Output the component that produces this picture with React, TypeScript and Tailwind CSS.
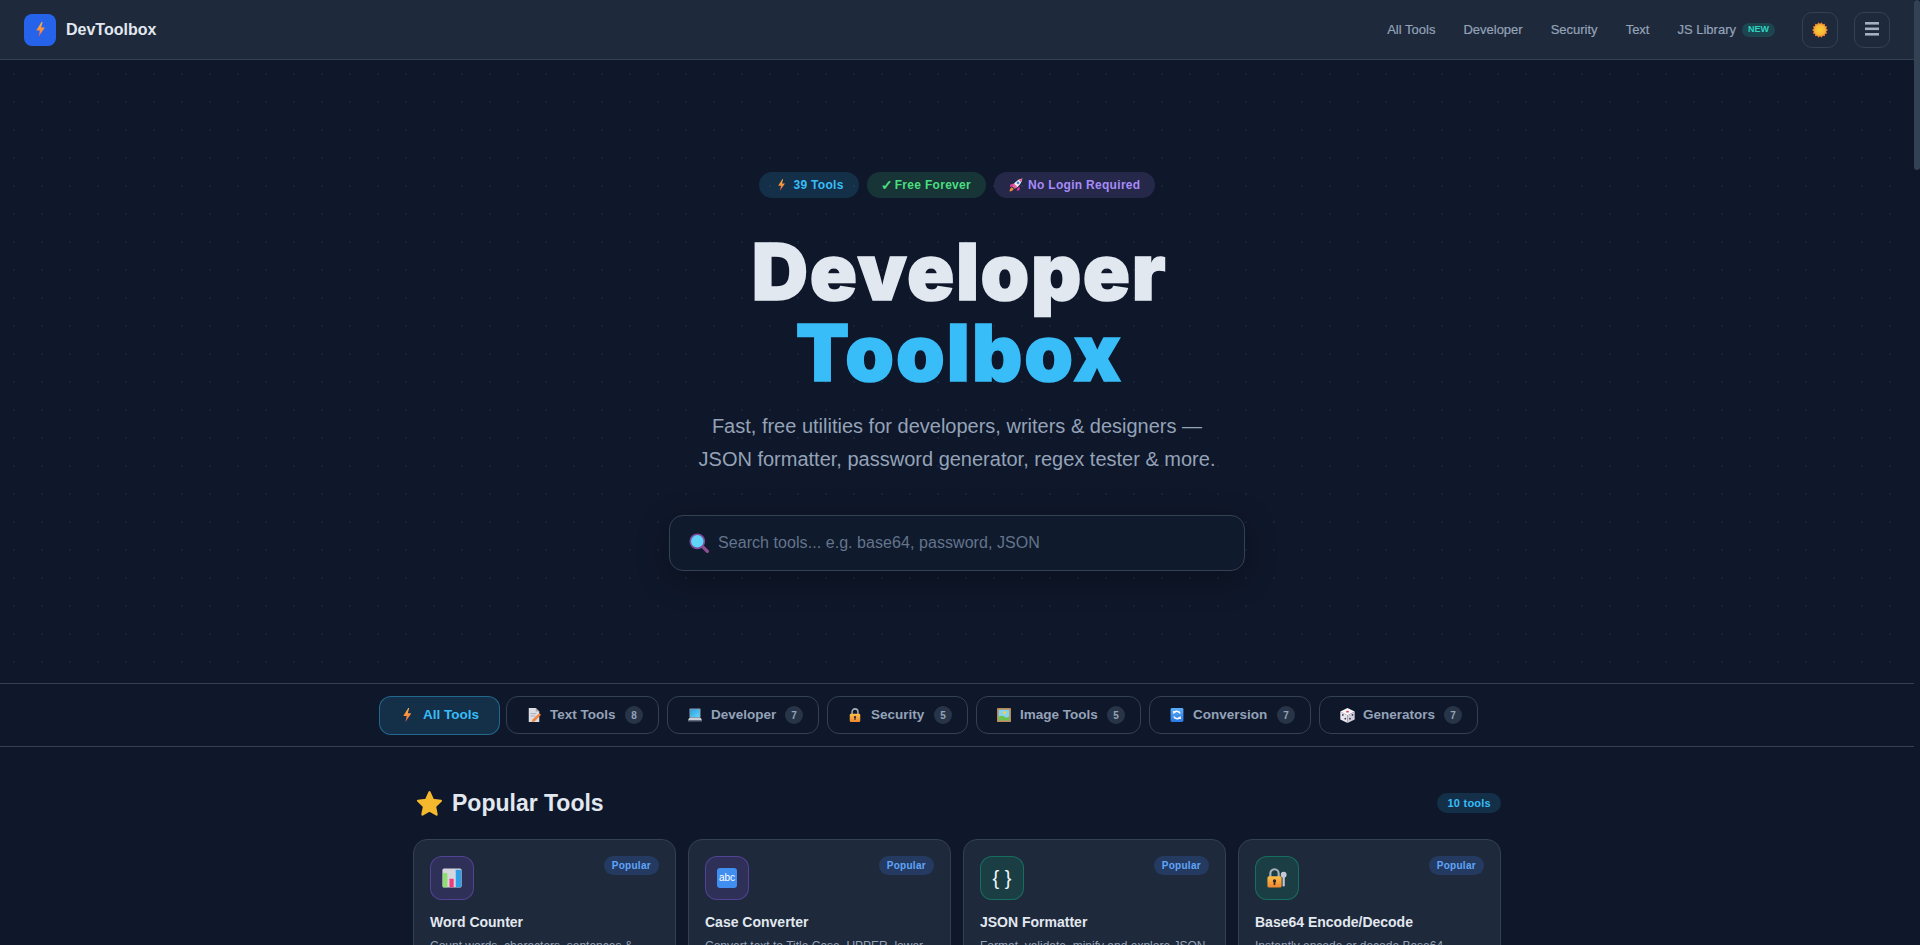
type IconProps = { className?: string };

function Bolt({ className }: IconProps) {
  return (
    <svg viewBox="0 0 9 15" className={className}>
      <defs>
        <linearGradient id="boltGrad" x1="0" y1="0" x2="0" y2="1">
          <stop offset="0" stopColor="#fdb347" />
          <stop offset="0.6" stopColor="#f98a3c" />
          <stop offset="1" stopColor="#ee4d5f" />
        </linearGradient>
      </defs>
      <path d="M5.6 0 0.2 8.6H3.9L2.5 15 8.9 5.6H5.100L6.600 0Z" fill="url(#boltGrad)" />
    </svg>
  );
}

const sunPoints = Array.from({ length: 28 }, (_, i) => {
  const r = i % 2 === 0 ? 12 : 9.4;
  const a = (i * Math.PI) / 14;
  return `${(12 + r * Math.cos(a)).toFixed(2)},${(12 + r * Math.sin(a)).toFixed(2)}`;
}).join(" ");

function Sun({ className }: IconProps) {
  return (
    <svg viewBox="0 0 24 24" className={className}>
      <defs>
        <radialGradient id="sunGrad">
          <stop offset="0" stopColor="#f9cb3c" />
          <stop offset="0.62" stopColor="#f7b735" />
          <stop offset="0.8" stopColor="#f28f30" />
          <stop offset="1" stopColor="#e8662c" />
        </radialGradient>
      </defs>
      <polygon points={sunPoints} fill="url(#sunGrad)" />
    </svg>
  );
}

function Rocket({ className }: IconProps) {
  return (
    <svg viewBox="0 0 24 24" className={className}>
      <path d="M5 16c-2.500 1-4 3.500-4 7 3.500 0 6-1.500 7-4Z" fill="#f0883a" />
      <path d="M7.500 9.500 2 11l-0.500 4.500 5-1.500Z" fill="#d8389a" />
      <path d="M14.500 16.500 13 22l4.500-0.500L19 16Z" fill="#d8389a" />
      <path d="M6 14C9 7.500 15 2.500 23 1c-1.500 8-6 14-13 17Z" fill="#eceef4" />
      <path d="M6 14c1-2 1.500-3 2.500-4.500l6 6c-1.500 1-3 2-4.500 2.500Z" fill="#f25a9a" />
      <path d="M17 3.500 23 1l-2.500 6Z" fill="#f0508a" />
      <circle cx="15.500" cy="8.500" r="2.400" fill="#4a86d8" />
    </svg>
  );
}

function Search({ className }: IconProps) {
  return (
    <svg viewBox="0 0 24 24" className={className}>
      <line x1="15.500" y1="15.500" x2="22" y2="22" stroke="#8e4f8f" strokeWidth="4" strokeLinecap="round" />
      <circle cx="10" cy="10" r="8.500" fill="#5fd4f7" stroke="#7c4b9c" strokeWidth="2" />
    </svg>
  );
}

function Doc({ className }: IconProps) {
  return (
    <svg viewBox="0 0 24 24" className={className}>
      <path d="M3 0h12l6 6v18H3Z" fill="#dddde4" />
      <path d="M15 0l6 6h-6Z" fill="#a8a8b6" />
      <rect x="6" y="9" width="10" height="1.500" fill="#a8a8b6" />
      <rect x="6" y="13" width="8" height="1.500" fill="#a8a8b6" />
      <path d="M21 9l3 2.500L13 23l-5 1 1.500-4.500Z" fill="#f0843a" />
    </svg>
  );
}

function Laptop({ className }: IconProps) {
  return (
    <svg viewBox="0 0 24 24" className={className}>
      <defs>
        <linearGradient id="lapGrad" x1="0" y1="0" x2="1" y2="1">
          <stop offset="0" stopColor="#2a9fe6" />
          <stop offset="1" stopColor="#62d6f7" />
        </linearGradient>
      </defs>
      <rect x="2.500" y="1" width="19" height="16" rx="1" fill="#8c98a8" />
      <rect x="4" y="2.500" width="16" height="13" fill="url(#lapGrad)" />
      <path d="M2 17h20l2 4H0Z" fill="#c9cfd8" />
      <rect x="0" y="21" width="24" height="2" fill="#6f7b8c" />
    </svg>
  );
}

function Lock({ className }: IconProps) {
  return (
    <svg viewBox="0 0 20 24" className={className}>
      <defs>
        <linearGradient id="lockGrad" x1="0" y1="0" x2="0" y2="1">
          <stop offset="0" stopColor="#fbc04a" />
          <stop offset="1" stopColor="#f0882e" />
        </linearGradient>
      </defs>
      <path d="M5 11V6.500a5 5 0 0 1 10 0V11" fill="none" stroke="#a9adb8" strokeWidth="2.600" />
      <rect x="1" y="10" width="18" height="14" rx="2" fill="url(#lockGrad)" />
      <circle cx="10" cy="15.500" r="2" fill="#3a2a35" />
      <rect x="9" y="16" width="2" height="4.500" fill="#3a2a35" />
    </svg>
  );
}

function Frame({ className }: IconProps) {
  return (
    <svg viewBox="0 0 24 24" className={className}>
      <rect x="0" y="0" width="24" height="24" rx="1" fill="#b98a58" />
      <rect x="3" y="3" width="18" height="18" fill="#86d3ef" />
      <circle cx="13" cy="8" r="2.500" fill="#f8d24a" />
      <path d="M3 15c4-3 7-2 10 0s5 1 8-1v7H3Z" fill="#6dc24c" />
    </svg>
  );
}

function Sync({ className }: IconProps) {
  return (
    <svg viewBox="0 0 24 24" className={className}>
      <defs>
        <linearGradient id="syncGrad" x1="0" y1="0" x2="0" y2="1">
          <stop offset="0" stopColor="#5aaefa" />
          <stop offset="1" stopColor="#2a78e2" />
        </linearGradient>
      </defs>
      <rect x="1" y="0" width="22" height="24" rx="2.500" fill="url(#syncGrad)" />
      <path d="M17.500 9.500A6.200 6.200 0 0 0 7.500 7.500" fill="none" stroke="#fff" strokeWidth="2.500" />
      <path d="M6.500 14.500A6.200 6.200 0 0 0 16.500 16.500" fill="none" stroke="#fff" strokeWidth="2.500" />
      <path d="M5 5l5.500 1-4.500 4.500Z" fill="#fff" />
      <path d="M19 19l-5.500-1 4.500-4.500Z" fill="#fff" />
    </svg>
  );
}

function Dice({ className }: IconProps) {
  return (
    <svg viewBox="0 0 24 24" className={className}>
      <path d="M12 0 23.500 5.500 12 12 0.500 5.500Z" fill="#f7f5f9" />
      <path d="M0.500 5.500 12 12v12L0.500 18.500Z" fill="#e8e5ee" />
      <path d="M23.500 5.500 12 12v12L23.500 18.500Z" fill="#d2cedb" />
      <ellipse cx="12" cy="5.800" rx="2.300" ry="1.500" fill="#e2475c" />
      <circle cx="4.500" cy="11" r="1.400" fill="#3b3550" />
      <circle cx="8.500" cy="17" r="1.400" fill="#3b3550" />
      <circle cx="16" cy="17" r="1.400" fill="#3b3550" />
      <circle cx="20" cy="11" r="1.400" fill="#3b3550" />
    </svg>
  );
}

function Chart({ className }: IconProps) {
  return (
    <svg viewBox="0 0 24 24" className={className}>
      <rect x="0.500" y="0.500" width="23" height="23" rx="2" fill="#d6d7dd" />
      <rect x="1" y="6" width="5.500" height="17" rx="0.800" fill="#8fdf70" />
      <rect x="9" y="13" width="5" height="10" rx="0.500" fill="#ef3a7c" />
      <rect x="16.500" y="2" width="6.500" height="21" rx="0.800" fill="#2f9fe8" />
    </svg>
  );
}

function LockKey({ className }: IconProps) {
  return (
    <svg viewBox="0 0 24 24" className={className}>
      <defs>
        <linearGradient id="lockKeyGrad" x1="0" y1="0" x2="0" y2="1">
          <stop offset="0" stopColor="#fbbf48" />
          <stop offset="1" stopColor="#f0862e" />
        </linearGradient>
      </defs>
      <circle cx="20" cy="8" r="3.500" fill="#c6c9d3" />
      <rect x="18.700" y="9" width="2.600" height="13" fill="#c6c9d3" />
      <path d="M4 11V6.500a5 5 0 0 1 10 0V11" fill="none" stroke="#a9adb8" strokeWidth="2.600" />
      <rect x="0.500" y="10" width="17" height="13.500" rx="2" fill="url(#lockKeyGrad)" />
      <circle cx="9" cy="15.500" r="2" fill="#2f2430" />
      <rect x="8" y="16" width="2" height="4.500" fill="#2f2430" />
    </svg>
  );
}

function Star({ className }: IconProps) {
  return (
    <svg viewBox="0 0 24 24" className={className}>
      <path
        d="M12 2l3 6.700 7.200 0.900-5.300 5 1.400 7.200L12 18.200l-6.300 3.600 1.400-7.200-5.300-5L9 8.700Z"
        fill="#f4b92c"
        stroke="#f4b92c"
        strokeWidth="2"
        strokeLinejoin="round"
      />
    </svg>
  );
}

function Menu({ className }: IconProps) {
  return (
    <svg viewBox="0 0 14 14" className={className}>
      <rect x="0" y="0" width="14" height="2.600" fill="#a3b0c4" />
      <rect x="0" y="5.500" width="14" height="2.600" fill="#a3b0c4" />
      <rect x="0" y="11" width="14" height="2.600" fill="#a3b0c4" />
    </svg>
  );
}

const filters = [
  { key: "all", label: "All Tools", width: "w-[121px] -mr-[2px]", active: true },
  { key: "text", label: "Text Tools", count: 8, width: "w-[153px]" },
  { key: "dev", label: "Developer", count: 7, width: "w-[152px]" },
  { key: "sec", label: "Security", count: 5, width: "w-[141px]" },
  { key: "img", label: "Image Tools", count: 5, width: "w-[165px]" },
  { key: "conv", label: "Conversion", count: 7, width: "w-[162px]" },
  { key: "gen", label: "Generators", count: 7, width: "w-[159px]" },
];

function FilterIcon({ name }: { name: string }) {
  if (name === "all") return <Bolt className="h-[14px] w-[8.5px]" />;
  if (name === "text") return <Doc className="h-[14px] w-[14px]" />;
  if (name === "dev") return <Laptop className="h-[14px] w-[14px]" />;
  if (name === "sec") return <Lock className="h-[14px] w-[12px]" />;
  if (name === "img") return <Frame className="h-[14px] w-[14px]" />;
  if (name === "conv") return <Sync className="h-[14px] w-[14px]" />;
  return <Dice className="h-[15px] w-[15px]" />;
}

const cards = [
  {
    key: "chart",
    title: "Word Counter",
    desc: "Count words, characters, sentences & reading time.",
    tint: "border-[#8b5cf6]/40 bg-[#8b5cf6]/15",
  },
  {
    key: "abc",
    title: "Case Converter",
    desc: "Convert text to Title Case, UPPER, lower and more formats.",
    tint: "border-[#8b5cf6]/40 bg-[#8b5cf6]/15",
  },
  {
    key: "json",
    title: "JSON Formatter",
    desc: "Format, validate, minify and explore JSON with ease.",
    tint: "border-[#10b981]/40 bg-[#10b981]/15",
  },
  {
    key: "lock",
    title: "Base64 Encode/Decode",
    desc: "Instantly encode or decode Base64 encoded strings.",
    tint: "border-[#10b981]/40 bg-[#10b981]/15",
  },
];

function CardIcon({ name }: { name: string }) {
  if (name === "chart") return <Chart className="h-5 w-5" />;
  if (name === "lock") return <LockKey className="h-5 w-5" />;
  if (name === "abc")
    return <span className="flex h-5 w-5 items-center justify-center rounded-[3px] bg-[#3f8ef0] text-[10px] leading-none text-white">abc</span>;
  return <span className="text-[20px] text-[#f1f5f9]">{"{ }"}</span>;
}

const navLinks = ["All Tools", "Developer", "Security", "Text"];

export default function App() {
  return (
    <div className="flex h-[945px] overflow-hidden bg-[#0f172a] [font-family:'Liberation_Sans',Arial,sans-serif]">
      <div className="min-w-0 flex-1">
        <header className="flex h-[60px] items-center justify-between border-b border-[#334155] bg-[#1e293b] px-6">
          <div className="flex items-center gap-2.5">
            <div className="flex h-8 w-8 items-center justify-center rounded-lg bg-[#2563eb]">
              <Bolt className="h-[15px] w-[9px]" />
            </div>
            <span className="text-[16px] font-bold text-[#e2e8f0]">DevToolbox</span>
          </div>
          <div className="flex items-center">
            <nav className="flex items-center gap-7 text-[13px] text-[#94a3b8] [-webkit-text-stroke:0.2px_#94a3b8]">
              {navLinks.map((l) => (
                <span key={l}>{l}</span>
              ))}
              <span className="flex items-center gap-1.5">
                JS Library
                <span className="flex h-[14px] items-center rounded-full bg-[#14b8a6]/20 px-1.5 text-[9px] font-bold leading-none text-[#2dd4bf] [-webkit-text-stroke:0]">NEW</span>
              </span>
            </nav>
            <div className="ml-[27px] flex h-9 w-9 items-center justify-center rounded-[10px] border border-[#334155]">
              <Sun className="h-4 w-4" />
            </div>
            <div className="ml-4 flex h-9 w-9 items-center justify-center rounded-[10px] border border-[#334155] pb-0.5">
              <Menu className="h-[14px] w-[14px]" />
            </div>
          </div>
        </header>

        <section className="flex flex-col items-center bg-[radial-gradient(circle,#1a2438_1px,transparent_1px)] bg-[size:28px_28px] py-[112px]">
          <div className="flex gap-2 text-[12px] font-bold tracking-[0.3px]">
            <span className="flex h-[26px] items-center gap-[9px] rounded-full bg-[#38bdf8]/15 pl-[19px] pr-[15px] text-[#38bdf8]">
              <Bolt className="h-3 w-[7px]" />
              39 Tools
            </span>
            <span className="flex h-[26px] items-center gap-1 rounded-full bg-[#4ade80]/15 pl-3.5 pr-[15px] text-[#4ade80]">
              <span className="w-[10px] text-[14px] leading-none">✓</span>
              Free Forever
            </span>
            <span className="flex h-[26px] items-center gap-[5px] rounded-full bg-[#a78bfa]/15 pl-[15px] pr-[15px] text-[#a78bfa]">
              <Rocket className="h-3.5 w-3.5" />
              No Login Required
            </span>
          </div>
          <h1 className="mt-[33px] pl-[5px] text-center text-[78px] font-black leading-[81px] tracking-[1.6px] text-[#e2e8f0] [-webkit-text-stroke:1.5px] [font-family:Inter,sans-serif]">
            Developer
            <br />
            <span className="tracking-[2px] text-[#38bdf8]">Toolbox</span>
          </h1>
          <p className="mt-[17px] text-center text-[20px] leading-[33px] text-[#94a3b8]">
            Fast, free utilities for developers, writers &amp; designers —
            <br />
            JSON formatter, password generator, regex tester &amp; more.
          </p>
          <div className="mt-[39px] flex h-14 w-[576px] items-center gap-[9px] rounded-[14px] border border-[#334155] bg-[#0f1a2d] pl-[19px] shadow-[0_8px_32px_rgba(0,0,0,0.3)]">
            <Search className="h-5 w-5" />
            <span className="text-[16px] tracking-[0.06px] text-[#64748b]">Search tools... e.g. base64, password, JSON</span>
          </div>
        </section>

        <div className="flex h-[64px] items-center gap-2 border-y border-[#334155] pl-[379px] text-[13.5px] font-bold text-[#94a3b8]">
          {filters.map((f) => (
            <div
              key={f.key}
              className={
                "flex items-center gap-2 rounded-[12px] border pl-[19px] pr-[15px] " +
                f.width +
                (f.active ? " h-[39px] border-[#38bdf8]/40 bg-[#38bdf8]/15 text-[#38bdf8]" : " h-[38px] border-[#334155]")
              }
            >
              <span className="flex w-4 justify-center">
                <FilterIcon name={f.key} />
              </span>
              <span>{f.label}</span>
              {f.count ? (
                <span className="ml-auto flex h-[18px] w-[18px] items-center justify-center rounded-full bg-[#334155]/70 text-[10px]">{f.count}</span>
              ) : null}
            </div>
          ))}
        </div>

        <main className="mx-auto w-[1088px] pt-10">
          <div className="flex h-8 items-center justify-between">
            <h2 className="flex items-center gap-[9px] pl-[3px] text-[23px] font-bold text-[#e2e8f0]">
              <Star className="h-[27px] w-[27px]" />
              Popular Tools
            </h2>
            <span className="flex h-5 items-center rounded-full bg-[#38bdf8]/15 px-2.5 text-[11px] font-bold tracking-[0.25px] text-[#38bdf8]">10 tools</span>
          </div>
          <div className="mt-5 grid grid-cols-4 gap-3">
            {cards.map((c) => (
              <div key={c.key} className="rounded-[14px] border border-[#334155] bg-[#1e293b] p-4">
                <div className="flex items-start justify-between">
                  <div className={"flex h-11 w-11 items-center justify-center rounded-xl border " + c.tint}>
                    <CardIcon name={c.key} />
                  </div>
                  <span className="flex h-[19px] items-center rounded-full bg-[#3b82f6]/20 px-2 text-[10px] font-bold tracking-[0.3px] text-[#60a5fa]">Popular</span>
                </div>
                <h3 className="mt-3 text-[14px] font-bold text-[#e2e8f0]">{c.title}</h3>
                <p className="mt-1 text-[12px] leading-[18px] text-[#94a3b8]">{c.desc}</p>
              </div>
            ))}
          </div>
        </main>
      </div>
      <aside className="w-[6px] shrink-0">
        <div className="h-[170px] rounded-[3px] bg-[#334155]" />
      </aside>
    </div>
  );
}
